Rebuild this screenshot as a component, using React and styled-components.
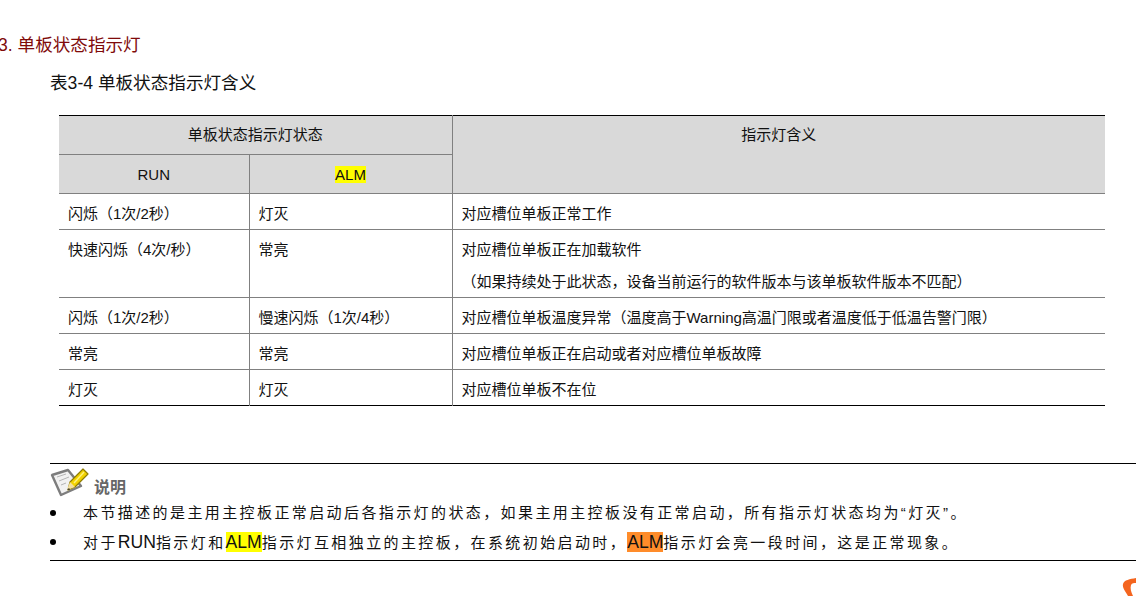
import React from 'react'
import styled, { createGlobalStyle } from 'styled-components'

const GlobalStyle = createGlobalStyle`
  html, body {
    margin: 0;
    padding: 0;
    background: #fff;
    overflow: hidden;
  }
`

const CJK = `'Liberation Sans', 'Noto Sans CJK SC', sans-serif`

const Page = styled.div`
  position: relative;
  width: 1136px;
  height: 596px;
  overflow: hidden;
  padding-top: 33px;
  box-sizing: border-box;
  font-family: ${CJK};
  color: #111;
`

const SectionTitle = styled.h4`
  margin: 0 0 13px -2px;
  font-size: 17.6px;
  font-weight: 400;
  line-height: 24px;
  color: #7f0a0a;
`

const Caption = styled.div`
  margin: 0 0 19px 50px;
  font-size: 17.6px;
  line-height: 26px;
`

const Table = styled.table`
  margin-left: 59px;
  width: 1046px;
  table-layout: fixed;
  border-collapse: collapse;
  border-top: 1px solid #000;
  border-bottom: 1px solid #000;
`

const Col = styled.col`
  width: ${p => p.$w}px;
`

const Row = styled.tr`
  height: ${p => p.$h}px;
`

const Head = styled.th`
  padding: ${p => (p.$sub ? '2px 10px 0' : '0 10px')};
  background: #d9d9d9;
  border: 1px solid #808080;
  border-top: 0;
  font-size: 15px;
  font-weight: 400;
  text-align: center;
  vertical-align: ${p => (p.$top ? 'top' : 'middle')};
  line-height: ${p => (p.$sub ? '36px' : '38px')};
  &:first-child {
    border-left: 0;
  }
  &:last-child {
    border-right: 0;
  }
`

const Cell = styled.td`
  padding: 4px 9px 0;
  border: 1px solid #808080;
  font-size: 15px;
  vertical-align: top;
  white-space: nowrap;
  &:first-child {
    border-left: 0;
  }
  &:last-child {
    border-right: 0;
  }
  tr:last-child > & {
    border-bottom: 0;
  }
`

const CellLine = styled.div`
  line-height: 32px;
  &:last-child {
    margin-bottom: -1px;
  }
`

const Mark = styled.span`
  background: ${p => p.$bg || '#ffff00'};
`

const Note = styled.div`
  margin: 57px 0 0 50px;
  height: 96px;
  border-top: 1px solid #000;
  border-bottom: 1px solid #000;
`

const NoteHead = styled.div`
  display: flex;
  align-items: flex-end;
  height: 34px;
  gap: 4px;
  font-size: 16px;
  font-weight: 700;
  line-height: 21px;
  color: #666;
`

const NoteList = styled.ul`
  margin: 0;
  padding: 0;
  list-style: none;
`

const NoteItem = styled.li`
  position: relative;
  padding-left: 33px;
  height: 29px;
  font-size: 15px;
  letter-spacing: 2.4px;
  line-height: 30px;
  white-space: nowrap;
  &::before {
    content: '';
    position: absolute;
    left: 0;
    top: 12px;
    width: 6px;
    height: 6px;
    border-radius: 50%;
    background: #000;
  }
`

const Latin = styled.span`
  font-size: 17.6px;
  letter-spacing: 0;
`

const CornerLogo = styled.svg`
  position: absolute;
  right: 0;
  bottom: 0;
`

const NoteIcon = () => (
  <svg width="40" height="32" viewBox="0 0 40 32">
    <path d="M2 9 L18 4 L31 20 L11 29 Z" fill="#f1f1f1" stroke="#7d7d7d" strokeWidth="2.4" strokeLinejoin="round" />
    <path d="M7 11 L16 8 M9 15 L19 11 M11 19 L16 17" stroke="#b5b5b5" strokeWidth="1" />
    <path d="M20 16 L33 3 L38 8 L25 21 L18 24 Z" fill="#f2d200" stroke="#8f7c00" strokeWidth="1.2" strokeLinejoin="round" />
    <path d="M20 16 L25 21 L17 24 Z" fill="#f3dfa0" />
    <path d="M19 22 L20 23.5 L17 24 Z" fill="#222" />
    <path d="M24 17 L34 6" stroke="#fff27a" strokeWidth="1.5" />
  </svg>
)

const rows = [
  { h: 36, a: '闪烁（1次/2秒）', b: '灯灭', c: ['对应槽位单板正常工作'] },
  { h: 68, a: '快速闪烁（4次/秒）', b: '常亮', c: ['对应槽位单板正在加载软件', '（如果持续处于此状态，设备当前运行的软件版本与该单板软件版本不匹配）'] },
  { h: 36, a: '闪烁（1次/2秒）', b: '慢速闪烁（1次/4秒）', c: ['对应槽位单板温度异常（温度高于Warning高温门限或者温度低于低温告警门限）'] },
  { h: 36, a: '常亮', b: '常亮', c: ['对应槽位单板正在启动或者对应槽位单板故障'] },
  { h: 36, a: '灯灭', b: '灯灭', c: ['对应槽位单板不在位'] }
]

const App = () => (
  <Page>
    <GlobalStyle />
    <SectionTitle>3. 单板状态指示灯</SectionTitle>
    <Caption>表3-4 单板状态指示灯含义</Caption>
    <Table>
      <colgroup>
        <Col $w={190} />
        <Col $w={203} />
        <Col $w={653} />
      </colgroup>
      <thead>
        <Row $h={39}>
          <Head colSpan={2}>单板状态指示灯状态</Head>
          <Head rowSpan={2} $top>指示灯含义</Head>
        </Row>
        <Row $h={39}>
          <Head $sub>RUN</Head>
          <Head $sub><Mark>ALM</Mark></Head>
        </Row>
      </thead>
      <tbody>
        {rows.map((row, i) => (
          <Row key={i} $h={row.h}>
            <Cell><CellLine>{row.a}</CellLine></Cell>
            <Cell><CellLine>{row.b}</CellLine></Cell>
            <Cell>
              {row.c.map((line, j) => <CellLine key={j}>{line}</CellLine>)}
            </Cell>
          </Row>
        ))}
      </tbody>
    </Table>
    <Note>
      <NoteHead>
        <NoteIcon />
        <span>说明</span>
      </NoteHead>
      <NoteList>
        <NoteItem>本节描述的是主用主控板正常启动后各指示灯的状态，如果主用主控板没有正常启动，所有指示灯状态均为“灯灭”。</NoteItem>
        <NoteItem>
          对于<Latin>RUN</Latin>指示灯和<Latin><Mark>ALM</Mark></Latin>指示灯互相独立的主控板，在系统初始启动时，
          <Latin><Mark $bg="#ff8c2a">ALM</Mark></Latin>指示灯会亮一段时间，这是正常现象。
        </NoteItem>
      </NoteList>
    </Note>
    <CornerLogo width="14" height="18" viewBox="0 0 14 18">
      <path d="M14 0 C8 1 2 2 1 6 C0 10 4 14 6 18 L11 18 C9 14 8 10 9 7 C10 5 12 5 14 5 Z" fill="#f4651f" />
    </CornerLogo>
  </Page>
)

export default App
